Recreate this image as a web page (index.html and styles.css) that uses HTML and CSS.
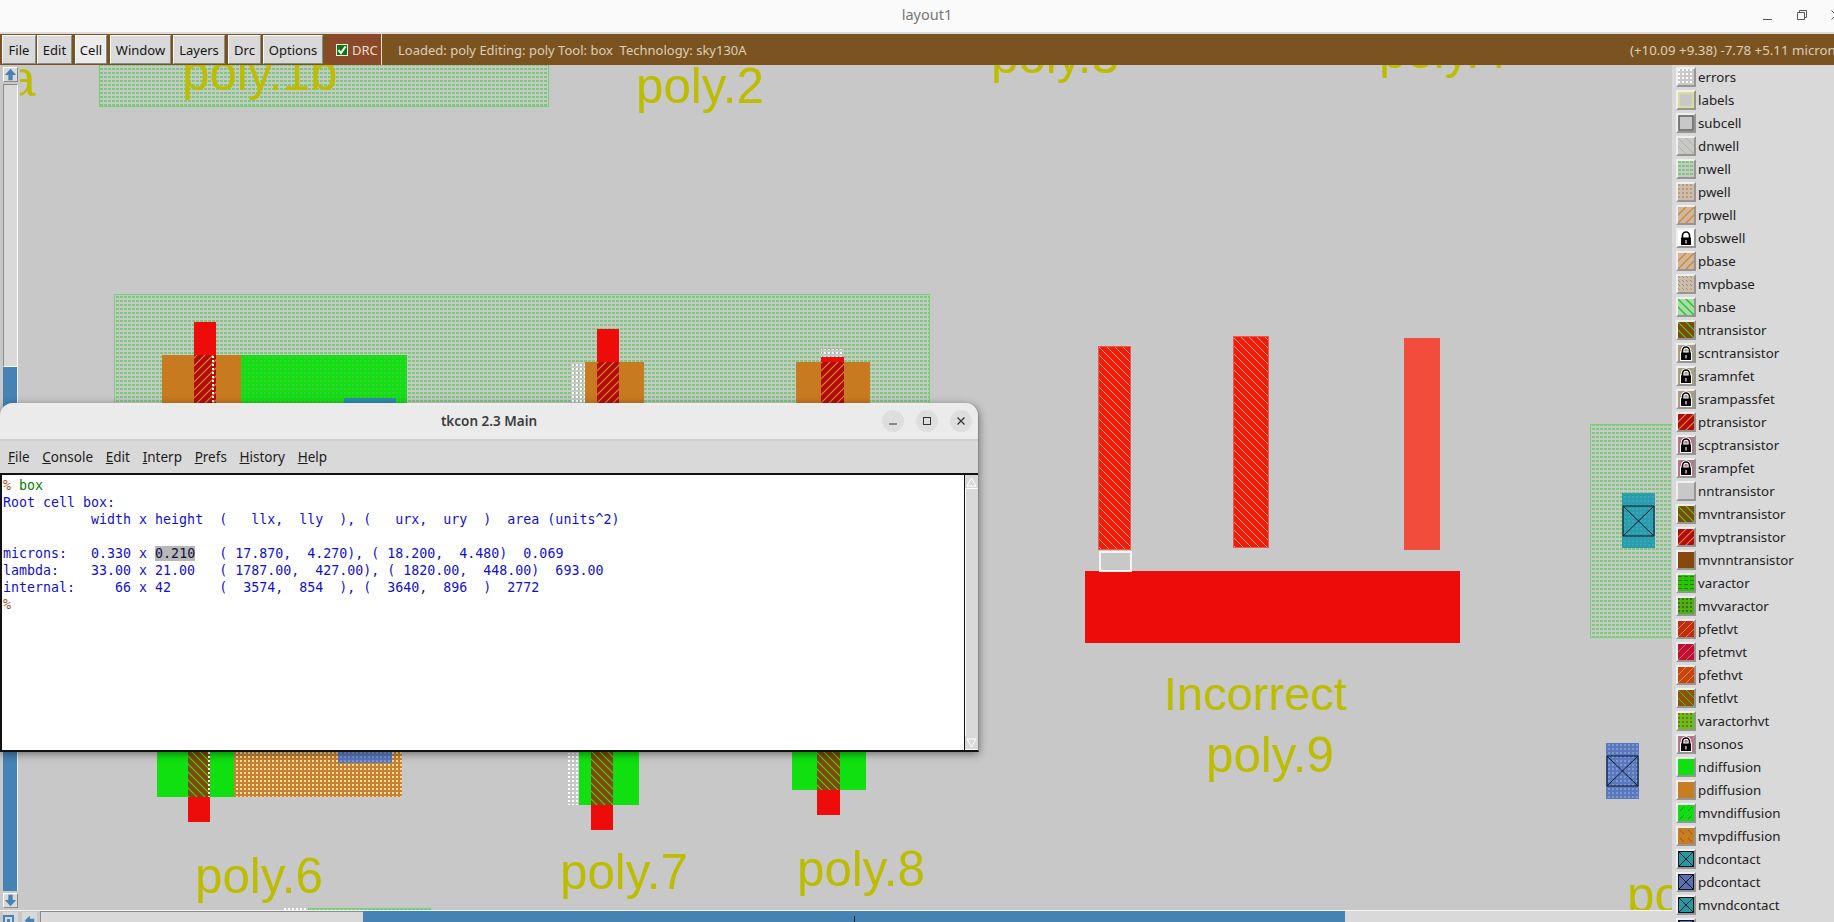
FILE: index.html
```html
<!DOCTYPE html>
<html lang="en">
<head>
  <meta charset="UTF-8">
  <meta name="viewport" content="width=device-width, initial-scale=1.0">
  <title>layout1</title>
  <link rel="stylesheet" href="styles.css">
</head>
<body>
  <header class="titlebar">
    <span class="titlebar-name">layout1</span>
    <div class="titlebar-controls">
      <svg width="12" height="12" viewBox="0 0 12 12"><path d="M1 10.5H10" stroke="#555" fill="none"/></svg>
      <svg width="12" height="12" viewBox="0 0 12 12"><path d="M1.5 3.5H8.5V10.5H1.5ZM3.5 3.5V1.5H10.5V8.5H8.5" stroke="#555" fill="none"/></svg>
      <svg width="12" height="12" viewBox="0 0 12 12"><path d="M1.5 1.5L10.5 10.5M10.5 1.5L1.5 10.5" stroke="#555" fill="none"/></svg>
    </div>
  </header>

  <div class="toolbar">
    <button class="menu-btn btn-file">File</button>
    <button class="menu-btn btn-edit">Edit</button>
    <button class="menu-btn btn-cell active">Cell</button>
    <button class="menu-btn btn-window">Window</button>
    <button class="menu-btn btn-layers">Layers</button>
    <button class="menu-btn btn-drc">Drc</button>
    <button class="menu-btn btn-options">Options</button>
    <div class="drc-toggle">
      <svg class="drc-check" width="12" height="12" viewBox="0 0 12 12"><rect x="0.5" y="0.5" width="11" height="11" fill="#0a7a10" stroke="#eee"/><path d="M2.5 6L5 9L9.5 2.5" stroke="#fff" stroke-width="2" fill="none"/></svg>
      <span>DRC</span>
    </div>
    <span class="status">Loaded: poly Editing: poly Tool: box&nbsp; Technology: sky130A</span>
    <span class="coords">(+10.09 +9.38) -7.78 +5.11 microns</span>
  </div>

  <div class="main">
    <div class="workspace">
      <div class="view-row">
        <div class="vscroll">
          <div class="scroll-btn"><svg width="13" height="13" viewBox="0 0 15 15"><path d="M7.5 1L14 8H10V14H5V8H1Z" fill="#4682b4"/></svg></div>
          <div class="vscroll-trough"></div>
          <div class="vscroll-thumb"></div>
          <div class="scroll-btn"><svg width="13" height="13" viewBox="0 0 15 15"><path d="M7.5 14L14 7H10V1H5V7H1Z" fill="#4682b4"/></svg></div>
        </div>

        <svg class="layout-view" viewBox="20 65 1652 845" width="1652" height="845">
          <defs>
            <pattern id="p-nwell" width="4" height="4" patternUnits="userSpaceOnUse"><rect width="4" height="4" fill="#c8c8c8"/><rect width="3" height="2" fill="#78cc78"/></pattern>
            <pattern id="p-pwell" width="4" height="4" patternUnits="userSpaceOnUse"><rect width="4" height="4" fill="#ccbcaa"/><rect width="2" height="2" fill="#b89c80"/></pattern>
            <pattern id="p-errors" width="4" height="4" patternUnits="userSpaceOnUse"><rect width="4" height="4" fill="#c8c8c8"/><rect width="2" height="2" fill="#fff"/></pattern>
            <pattern id="p-white" width="4" height="4" patternUnits="userSpaceOnUse"><rect width="2" height="2" fill="#fff"/></pattern>
            <pattern id="p-ndot" width="4" height="4" patternUnits="userSpaceOnUse"><rect width="4" height="4" fill="#10e010"/><rect width="2" height="2" fill="#3ccc3c"/></pattern>
            <pattern id="p-pdot" width="4" height="4" patternUnits="userSpaceOnUse"><rect width="4" height="4" fill="#c8822a"/><rect width="2" height="2" fill="#f2dcb4"/></pattern>
            <pattern id="p-bluedot" width="4" height="4" patternUnits="userSpaceOnUse"><rect width="4" height="4" fill="#5a78c0"/><rect width="2" height="2" fill="#7c98cc"/></pattern>
            <pattern id="p-tealdot" width="4" height="4" patternUnits="userSpaceOnUse"><rect width="4" height="4" fill="#2a9cb0"/><rect width="2" height="2" fill="#3aa6b4"/></pattern>
            <pattern id="p-ptrans" width="8" height="8" patternUnits="userSpaceOnUse"><rect width="8" height="8" fill="#b00c0c"/><path d="M-1 1L1 -1M0 8L8 0M7 9L9 7" stroke="#e8892c" stroke-width="1.1"/></pattern>
            <pattern id="p-ntrans" width="8" height="8" patternUnits="userSpaceOnUse"><rect width="8" height="8" fill="#7a4a10"/><path d="M-1 7L1 9M0 0L8 8M7 -1L9 1" stroke="#5cc810" stroke-width="1.2"/></pattern>
            <pattern id="p-polyhatch" width="8" height="8" patternUnits="userSpaceOnUse"><rect width="8" height="8" fill="#f01c08"/><path d="M-1 7L1 9M0 0L8 8M7 -1L9 1" stroke="#ffc8c0" stroke-width="0.8"/></pattern>
            <pattern id="p-dnwell" width="8" height="8" patternUnits="userSpaceOnUse"><rect width="8" height="8" fill="#c8c8c8"/><path d="M-1 7L1 9M0 0L8 8M7 -1L9 1" stroke="#b4b48c" stroke-width="1"/></pattern>
            <pattern id="p-rpwell" width="8" height="8" patternUnits="userSpaceOnUse"><rect width="8" height="8" fill="#d0b89c"/><path d="M-1 1L1 -1M0 8L8 0M7 9L9 7" stroke="#d08438" stroke-width="1.3"/></pattern>
            <pattern id="p-mvpbase" width="4" height="4" patternUnits="userSpaceOnUse"><rect width="4" height="4" fill="#ccbcaa"/><path d="M0 0L2 2" stroke="#a88a70" stroke-width="1"/></pattern>
            <pattern id="p-nbase" width="8" height="8" patternUnits="userSpaceOnUse"><rect width="8" height="8" fill="#aed8ae"/><path d="M-1 7L1 9M0 0L8 8M7 -1L9 1" stroke="#18cc18" stroke-width="1.4"/></pattern>
            <pattern id="p-vardash" width="6" height="4" patternUnits="userSpaceOnUse"><rect width="6" height="4" fill="#14d000"/><rect y="1" width="4" height="1" fill="#8a4a10"/></pattern>
            <pattern id="p-mvvar" width="4" height="4" patternUnits="userSpaceOnUse"><rect width="4" height="4" fill="#4cb410"/><rect width="2" height="2" fill="#4a6a10"/></pattern>
            <pattern id="p-varhvt" width="4" height="4" patternUnits="userSpaceOnUse"><rect width="4" height="4" fill="#58c818"/><rect width="2" height="2" fill="#a06010"/></pattern>
            <pattern id="p-pfetlvt" width="8" height="8" patternUnits="userSpaceOnUse"><rect width="8" height="8" fill="#c02c10"/><path d="M-1 1L1 -1M0 8L8 0M7 9L9 7" stroke="#e8892c" stroke-width="1"/></pattern>
            <pattern id="p-pfetmvt" width="8" height="8" patternUnits="userSpaceOnUse"><rect width="8" height="8" fill="#c01034"/><path d="M-1 1L1 -1M0 8L8 0M7 9L9 7" stroke="#e86070" stroke-width="1"/></pattern>
            <pattern id="p-pfethvt" width="8" height="8" patternUnits="userSpaceOnUse"><rect width="8" height="8" fill="#c84410"/><path d="M-1 1L1 -1M0 8L8 0M7 9L9 7" stroke="#f09030" stroke-width="1"/></pattern>
            <pattern id="p-nfetlvt" width="8" height="8" patternUnits="userSpaceOnUse"><rect width="8" height="8" fill="#8a5410"/><path d="M-1 7L1 9M0 0L8 8M7 -1L9 1" stroke="#5ac010" stroke-width="1"/></pattern>
            <pattern id="p-mvndiff" width="8" height="8" patternUnits="userSpaceOnUse"><rect width="8" height="8" fill="#14dc14"/><path d="M2 6L6 2" stroke="#0a8a0a" stroke-width="0.8"/></pattern>
            <pattern id="p-mvpdiff" width="8" height="8" patternUnits="userSpaceOnUse"><rect width="8" height="8" fill="#c87c24"/><path d="M2 2L6 6" stroke="#8a5414" stroke-width="0.8"/></pattern>
            <symbol id="lock" viewBox="0 0 16 16">
              <path d="M4.5 8V5.5a3.5 3.5 0 0 1 7 0V8" fill="none" stroke="#fff" stroke-width="3.4"/>
              <rect x="2" y="6.5" width="12" height="9.5" fill="#fff"/>
              <path d="M4.5 8V5.5a3.5 3.5 0 0 1 7 0V8" fill="none" stroke="#000" stroke-width="1.6"/>
              <rect x="3" y="7.5" width="10" height="7.5" fill="#000"/>
              <rect x="7" y="10" width="2" height="3.5" fill="#b08090"/>
            </symbol>
            <symbol id="cross" viewBox="0 0 16 16" preserveAspectRatio="none">
              <path class="cross-line" d="M0.5 0.5H15.5V15.5H0.5ZM0.5 0.5L15.5 15.5M15.5 0.5L0.5 15.5"/>
            </symbol>
          </defs>

          <g class="lbl">
            <text x="8" y="96">a</text>
            <text x="636" y="103">poly.2</text>
            <text x="991" y="73">poly.3</text>
            <text x="1379" y="68">poly.4</text>
          </g>

          <rect class="well" x="99.5" y="64.5" width="449" height="42" fill="url(#p-nwell)"/>
          <text class="lbl" x="182" y="90">poly.1b</text>

          <!-- poly.6 group, top half -->
          <rect class="well" x="114.5" y="294.5" width="815" height="200" fill="url(#p-nwell)"/>
          <rect x="194" y="322" width="22" height="33" fill="#ee0c0a"/>
          <rect x="162" y="355" width="79" height="60" fill="#c87a20"/>
          <rect x="194" y="355" width="22" height="60" fill="url(#p-ptrans)"/>
          <rect x="212" y="355" width="4" height="60" fill="url(#p-white)"/>
          <rect x="241" y="355" width="166" height="60" fill="url(#p-ndot)"/>
          <rect x="344" y="398" width="52" height="12" fill="#2b8fb0"/>

          <!-- poly.7 group, top half -->
          <rect x="597" y="329" width="22" height="33" fill="#ee0c0a"/>
          <rect x="571" y="363" width="14" height="50" fill="url(#p-white)"/>
          <rect x="585" y="362" width="59" height="50" fill="#c87a20"/>
          <rect x="597" y="362" width="22" height="50" fill="url(#p-ptrans)"/>

          <!-- poly.8 group, top half -->
          <rect x="821" y="349" width="23" height="8" fill="url(#p-white)"/>
          <rect x="821" y="357" width="23" height="5" fill="#ee0c0a"/>
          <rect x="796" y="362" width="74" height="50" fill="#c87a20"/>
          <rect x="821" y="362" width="23" height="50" fill="url(#p-ptrans)"/>

          <!-- lower halves below the console -->
          <rect x="157" y="740" width="77" height="57" fill="#10e010"/>
          <rect x="234" y="740" width="168" height="57" fill="url(#p-pdot)"/>
          <rect x="338" y="740" width="54" height="23" fill="url(#p-bluedot)"/>
          <rect x="188" y="740" width="22" height="57" fill="url(#p-ntrans)"/>
          <rect x="206" y="740" width="4" height="57" fill="url(#p-white)"/>
          <rect x="188" y="797" width="22" height="25" fill="#ee0c0a"/>
          <rect x="567" y="753" width="12" height="52" fill="url(#p-white)"/>
          <rect x="579" y="740" width="60" height="65" fill="#10e010"/>
          <rect x="591" y="740" width="22" height="65" fill="url(#p-ntrans)"/>
          <rect x="591" y="805" width="22" height="25" fill="#ee0c0a"/>
          <rect x="792" y="740" width="74" height="50" fill="#10e010"/>
          <rect x="817" y="740" width="23" height="50" fill="url(#p-ntrans)"/>
          <rect x="817" y="790" width="23" height="25" fill="#ee0c0a"/>

          <!-- incorrect poly.9 -->
          <rect class="poly-edge" x="1098.5" y="346.5" width="32" height="203" fill="url(#p-polyhatch)"/>
          <rect class="poly-edge" x="1233.5" y="336.5" width="35" height="211" fill="url(#p-polyhatch)"/>
          <rect x="1404" y="338" width="36" height="212" fill="#f24c3c"/>
          <rect x="1085" y="571" width="375" height="72" fill="#ec0c0a"/>
          <rect class="box-tool" x="1100" y="552" width="31" height="19"/>

          <!-- right edge wells and contacts -->
          <rect class="well" x="1590.5" y="424.5" width="90" height="213" fill="url(#p-nwell)"/>
          <rect x="1622" y="493" width="33" height="55" fill="url(#p-tealdot)"/>
          <use href="#cross" x="1622" y="505" width="33" height="32"/>
          <rect x="1606" y="743" width="33" height="56" fill="url(#p-bluedot)"/>
          <use href="#cross" x="1606" y="755" width="33" height="32"/>

          <rect class="well" x="308.5" y="908.5" width="122" height="10" fill="url(#p-nwell)"/>
          <rect x="283" y="908" width="24" height="2" fill="url(#p-white)"/>

          <g class="lbl">
            <text x="195" y="893">poly.6</text>
            <text x="560" y="889">poly.7</text>
            <text x="797" y="886">poly.8</text>
            <text class="lbl-note" x="1164" y="710">Incorrect</text>
            <text x="1206" y="772">poly.9</text>
            <text x="1627" y="912">poly</text>
          </g>
        </svg>
      </div>

      <div class="hscroll">
        <div class="scroll-corner"><svg width="11" height="11" viewBox="0 0 11 11"><path d="M1 1H10V10H1Z" fill="none" stroke="#4682b4" stroke-width="2"/><rect x="4" y="4" width="3" height="3" fill="#4682b4"/></svg></div>
        <div class="scroll-left"><svg width="15" height="11" viewBox="0 0 15 15"><path d="M1 7.5L8 1V5H14V10H8V14Z" fill="#4682b4"/></svg></div>
        <div class="hscroll-trough"></div>
        <div class="hscroll-thumb"></div>
        <div class="hscroll-rest"></div>
      </div>

      <section class="tkcon">
        <div class="tkcon-title">
          <span class="tkcon-name">tkcon 2.3 Main</span>
          <div class="tkcon-buttons">
            <span class="round-btn"><svg width="12" height="12" viewBox="0 0 12 12"><path d="M2 9H10" stroke="#333" stroke-width="1.2"/></svg></span>
            <span class="round-btn"><svg width="12" height="12" viewBox="0 0 12 12"><rect x="2.5" y="2.5" width="7" height="7" fill="none" stroke="#333" stroke-width="1"/></svg></span>
            <span class="round-btn"><svg width="12" height="12" viewBox="0 0 12 12"><path d="M2.5 2.5L9.5 9.5M9.5 2.5L2.5 9.5" stroke="#333" stroke-width="1.2"/></svg></span>
          </div>
        </div>
        <nav class="tkcon-menu">
          <span><u>F</u>ile</span>
          <span><u>C</u>onsole</span>
          <span><u>E</u>dit</span>
          <span><u>I</u>nterp</span>
          <span><u>P</u>refs</span>
          <span><u>H</u>istory</span>
          <span><u>H</u>elp</span>
        </nav>
        <div class="tkcon-body">
<pre class="console"><span class="prompt">%</span> <span class="cmd">box</span>
Root cell box:
           width x height  (   llx,  lly  ), (   urx,  ury  )  area (units^2)

microns:   0.330 x <span class="sel">0.210</span>   ( 17.870,  4.270), ( 18.200,  4.480)  0.069
lambda:    33.00 x 21.00   ( 1787.00,  427.00), ( 1820.00,  448.00)  693.00
internal:     66 x 42      (  3574,  854  ), (  3640,  896  )  2772
<span class="prompt">%</span></pre>
          <div class="tkcon-scroll">
            <div class="tkcon-up"><svg width="11" height="10" viewBox="0 0 11 10"><path d="M5.5 1L10 9H1Z" fill="#d9d9d9" stroke="#fff"/></svg></div>
            <div class="tkcon-track"></div>
            <div class="tkcon-up"><svg width="11" height="10" viewBox="0 0 11 10"><path d="M5.5 9L10 1H1Z" fill="#d9d9d9" stroke="#fff"/></svg></div>
          </div>
        </div>
      </section>
    </div>

    <aside class="layers">
      <div class="layer"><svg class="swatch" viewBox="0 0 16 16"><rect width="16" height="16" fill="url(#p-errors)"/></svg>errors</div>
      <div class="layer"><svg class="swatch" viewBox="0 0 16 16"><rect x="1" y="1" width="14" height="14" fill="#c8c8c8" stroke="#dcdc9c" stroke-width="2"/></svg>labels</div>
      <div class="layer"><svg class="swatch" viewBox="0 0 16 16"><rect x="1" y="1" width="14" height="14" fill="#c8c8c8" stroke="#666" stroke-width="1.6"/></svg>subcell</div>
      <div class="layer"><svg class="swatch" viewBox="0 0 16 16"><rect width="16" height="16" fill="url(#p-dnwell)"/></svg>dnwell</div>
      <div class="layer"><svg class="swatch" viewBox="0 0 16 16"><rect width="16" height="16" fill="url(#p-nwell)"/></svg>nwell</div>
      <div class="layer"><svg class="swatch" viewBox="0 0 16 16"><rect width="16" height="16" fill="url(#p-pwell)"/></svg>pwell</div>
      <div class="layer"><svg class="swatch" viewBox="0 0 16 16"><rect width="16" height="16" fill="url(#p-rpwell)"/></svg>rpwell</div>
      <div class="layer"><svg class="swatch" viewBox="0 0 16 16"><rect width="16" height="16" fill="#fff"/><use href="#lock" width="16" height="16"/></svg>obswell</div>
      <div class="layer"><svg class="swatch" viewBox="0 0 16 16"><rect width="16" height="16" fill="url(#p-rpwell)"/></svg>pbase</div>
      <div class="layer"><svg class="swatch" viewBox="0 0 16 16"><rect width="16" height="16" fill="url(#p-mvpbase)"/></svg>mvpbase</div>
      <div class="layer"><svg class="swatch" viewBox="0 0 16 16"><rect width="16" height="16" fill="url(#p-nbase)"/></svg>nbase</div>
      <div class="layer"><svg class="swatch" viewBox="0 0 16 16"><rect width="16" height="16" fill="url(#p-ntrans)"/></svg>ntransistor</div>
      <div class="layer"><svg class="swatch" viewBox="0 0 16 16"><rect width="16" height="16" fill="#a8a080"/><use href="#lock" width="16" height="16"/></svg>scntransistor</div>
      <div class="layer"><svg class="swatch" viewBox="0 0 16 16"><rect width="16" height="16" fill="#a8a080"/><use href="#lock" width="16" height="16"/></svg>sramnfet</div>
      <div class="layer"><svg class="swatch" viewBox="0 0 16 16"><rect width="16" height="16" fill="#a8a080"/><use href="#lock" width="16" height="16"/></svg>srampassfet</div>
      <div class="layer"><svg class="swatch" viewBox="0 0 16 16"><rect width="16" height="16" fill="url(#p-ptrans)"/></svg>ptransistor</div>
      <div class="layer"><svg class="swatch" viewBox="0 0 16 16"><rect width="16" height="16" fill="#b07888"/><use href="#lock" width="16" height="16"/></svg>scptransistor</div>
      <div class="layer"><svg class="swatch" viewBox="0 0 16 16"><rect width="16" height="16" fill="#b07888"/><use href="#lock" width="16" height="16"/></svg>srampfet</div>
      <div class="layer"><svg class="swatch" viewBox="0 0 16 16"><rect width="16" height="16" fill="#c8c8c8"/></svg>nntransistor</div>
      <div class="layer"><svg class="swatch" viewBox="0 0 16 16"><rect width="16" height="16" fill="url(#p-ntrans)"/></svg>mvntransistor</div>
      <div class="layer"><svg class="swatch" viewBox="0 0 16 16"><rect width="16" height="16" fill="url(#p-ptrans)"/></svg>mvptransistor</div>
      <div class="layer"><svg class="swatch" viewBox="0 0 16 16"><rect width="16" height="16" fill="#86480c"/></svg>mvnntransistor</div>
      <div class="layer"><svg class="swatch" viewBox="0 0 16 16"><rect width="16" height="16" fill="url(#p-vardash)"/></svg>varactor</div>
      <div class="layer"><svg class="swatch" viewBox="0 0 16 16"><rect width="16" height="16" fill="url(#p-mvvar)"/></svg>mvvaractor</div>
      <div class="layer"><svg class="swatch" viewBox="0 0 16 16"><rect width="16" height="16" fill="url(#p-pfetlvt)"/></svg>pfetlvt</div>
      <div class="layer"><svg class="swatch" viewBox="0 0 16 16"><rect width="16" height="16" fill="url(#p-pfetmvt)"/></svg>pfetmvt</div>
      <div class="layer"><svg class="swatch" viewBox="0 0 16 16"><rect width="16" height="16" fill="url(#p-pfethvt)"/></svg>pfethvt</div>
      <div class="layer"><svg class="swatch" viewBox="0 0 16 16"><rect width="16" height="16" fill="url(#p-nfetlvt)"/></svg>nfetlvt</div>
      <div class="layer"><svg class="swatch" viewBox="0 0 16 16"><rect width="16" height="16" fill="url(#p-varhvt)"/></svg>varactorhvt</div>
      <div class="layer"><svg class="swatch" viewBox="0 0 16 16"><rect width="16" height="16" fill="#b07888"/><use href="#lock" width="16" height="16"/></svg>nsonos</div>
      <div class="layer"><svg class="swatch" viewBox="0 0 16 16"><rect width="16" height="16" fill="#10e010"/></svg>ndiffusion</div>
      <div class="layer"><svg class="swatch" viewBox="0 0 16 16"><rect width="16" height="16" fill="#c87c24"/></svg>pdiffusion</div>
      <div class="layer"><svg class="swatch" viewBox="0 0 16 16"><rect width="16" height="16" fill="url(#p-mvndiff)"/></svg>mvndiffusion</div>
      <div class="layer"><svg class="swatch" viewBox="0 0 16 16"><rect width="16" height="16" fill="url(#p-mvpdiff)"/></svg>mvpdiffusion</div>
      <div class="layer"><svg class="swatch" viewBox="0 0 16 16"><rect width="16" height="16" fill="#249aa0"/><use href="#cross" width="16" height="16"/></svg>ndcontact</div>
      <div class="layer"><svg class="swatch" viewBox="0 0 16 16"><rect width="16" height="16" fill="#5a70b0"/><use href="#cross" width="16" height="16"/></svg>pdcontact</div>
      <div class="layer"><svg class="swatch" viewBox="0 0 16 16"><rect width="16" height="16" fill="#249aa0"/><use href="#cross" width="16" height="16"/></svg>mvndcontact</div>
      <div class="layer"><svg class="swatch" viewBox="0 0 16 16"><rect width="16" height="16" fill="#5a70b0"/><use href="#cross" width="16" height="16"/></svg>mvpdcontact</div>
    </aside>
  </div>
</body>
</html>
```

FILE: styles.css
```css
html, body {
  margin: 0;
  padding: 0;
  height: 100%;
  overflow: hidden;
}
body {
  font-family: 'Noto Sans', 'Open Sans', sans-serif;
  font-size: 13px;
  color: #1a1a1a;
  background: #d9d9d9;
  display: flex;
  flex-direction: column;
}

/* window title */
.titlebar {
  height: 32px;
  flex: none;
  background: #fafafa;
  border-bottom: 2px solid #dcdcdc;
  display: flex;
  justify-content: center;
  align-items: center;
  position: relative;
}
.titlebar-name {
  font-size: 14.5px;
  color: #777;
  margin-top: -5px;
  margin-left: 20px;
}
.titlebar-controls {
  position: absolute;
  left: 1762px;
  top: 9px;
  display: flex;
  gap: 22px;
}

/* toolbar */
.toolbar {
  height: 31px;
  flex: none;
  background: #7a5320;
  display: flex;
  align-items: stretch;
  white-space: nowrap;
  padding-left: 2px;
  overflow: hidden;
}
.menu-btn {
  font: inherit;
  font-size: 13px;
  color: #151515;
  background: #d9d9d9;
  padding: 0;
  box-sizing: border-box;
  border: 1px solid;
  border-color: #fff #8a8a8a #8a8a8a #fff;
  margin: 1px 2px 1px 0;
}
.menu-btn.active {
  background: #ececec;
}
.btn-file { width: 34px; margin-right: 1px; }
.btn-edit { width: 35px; margin-right: 3px; }
.btn-cell { width: 32px; margin-right: 3px; }
.btn-window { width: 61px; margin-right: 2px; }
.btn-layers { width: 52px; margin-right: 3px; }
.btn-drc { width: 33px; margin-right: 2px; }
.btn-options { width: 60px; margin-right: 4px; }
.drc-toggle {
  width: 55px;
  box-sizing: border-box;
  background: #8a4a2a;
  border-right: 1px solid #e8e0d0;
  color: #eadfce;
  display: flex;
  align-items: center;
  gap: 4px;
  padding-left: 9px;
}
.status {
  color: #dccfb8;
  margin-left: 16px;
  align-self: center;
}
.coords {
  color: #dccfb8;
  font-size: 13.3px;
  margin-left: auto;
  width: 204px;
  flex: none;
  overflow: hidden;
  align-self: center;
}

/* main area */
.main {
  flex: 1;
  display: flex;
  min-height: 0;
}
.workspace {
  width: 1672px;
  flex: none;
  display: flex;
  flex-direction: column;
  position: relative;
  background: #c8c8c8;
}
.view-row {
  display: flex;
  height: 845px;
  flex: none;
}

/* scrollbars */
.vscroll {
  width: 20px;
  flex: none;
  box-sizing: border-box;
  padding: 2px 2px 2px 3px;
  display: flex;
  flex-direction: column;
  gap: 2px;
}
.scroll-btn {
  height: 15px;
  flex: none;
  box-sizing: border-box;
  background: #d9d9d9;
  border: 1px solid;
  border-color: #fff #8a8a8a #8a8a8a #fff;
  display: flex;
  align-items: center;
  justify-content: center;
}
.vscroll-trough {
  height: 283px;
  flex: none;
  box-sizing: border-box;
  background: #d9d9d9;
  border: 1px solid;
  border-color: #8a8a8a #fff #fff #8a8a8a;
  margin-bottom: -2px;
}
.vscroll-thumb {
  flex: 1;
  background: #4682b4;
  border-right: 1px solid #eee;
}
.hscroll {
  height: 12px;
  flex: none;
  box-sizing: border-box;
  border-top: 1px solid #f4f4f4;
  display: flex;
  overflow: hidden;
}
.scroll-corner {
  width: 15px;
  margin: 1px 4px 0 3px;
  background: #d9d9d9;
}
.scroll-left {
  width: 15px;
  margin: 1px 3px 0 0;
  background: #d9d9d9;
}
.hscroll-trough {
  width: 323px;
  flex: none;
  box-sizing: border-box;
  background: #d9d9d9;
  border-top: 1px solid #8a8a8a;
  border-left: 1px solid #8a8a8a;
}
.hscroll-thumb {
  width: 982px;
  flex: none;
  background: linear-gradient(#222, #222) 491px 5px / 1px 100% no-repeat, #4682b4;
}
.hscroll-rest {
  flex: 1;
  background: #d9d9d9;
}

/* layout canvas */
.layout-view {
  flex: none;
  display: block;
  background: #c8c8c8;
}
.lbl {
  font-family: 'Liberation Sans', Arial, sans-serif;
  font-size: 49.3px;
  fill: #bcbc00;
}
.lbl-note {
  font-size: 47px;
}
.well {
  stroke: #74d274;
  stroke-width: 1;
}
.poly-edge {
  stroke: #f05a4a;
  stroke-width: 1;
}
.box-tool {
  fill: none;
  stroke: #f4f4f4;
  stroke-width: 2;
}
.cross-line {
  fill: none;
  stroke: #0c1420;
  stroke-width: 1;
  vector-effect: non-scaling-stroke;
}

/* tkcon console window */
.tkcon {
  position: absolute;
  left: 0;
  top: 338px;
  width: 979px;
  height: 349px;
  box-sizing: border-box;
  border-radius: 13px 13px 0 0;
  border-right: 1px solid #8a8a8a;
  border-bottom: 2px solid #111;
  box-shadow: 0 2px 8px rgba(0, 0, 0, 0.45);
  display: flex;
  flex-direction: column;
  overflow: hidden;
  background: #d9d9d9;
}
.tkcon-title {
  height: 36px;
  flex: none;
  background: #ebebeb;
  border-bottom: 2px solid #cfcfcf;
  display: flex;
  justify-content: center;
  align-items: center;
  position: relative;
}
.tkcon-name {
  font-size: 13.5px;
  font-weight: 600;
  color: #3c3c3c;
}
.tkcon-buttons {
  position: absolute;
  left: 882px;
  top: 7px;
  display: flex;
  gap: 12px;
}
.round-btn {
  width: 22px;
  height: 22px;
  border-radius: 50%;
  background: #dedede;
  display: flex;
  align-items: center;
  justify-content: center;
}
.tkcon-menu {
  height: 32px;
  flex: none;
  box-sizing: border-box;
  padding-left: 8px;
  display: flex;
  align-items: center;
  gap: 12.7px;
  font-size: 13.5px;
  color: #1c1c1c;
}
.tkcon-body {
  flex: 1;
  min-height: 0;
  display: flex;
  border-top: 2px solid #111;
  border-left: 2px solid #111;
}
.console {
  flex: 1;
  margin: 0;
  padding: 2px 0 0 1px;
  background: #fff;
  color: #1010d0;
  font-family: 'DejaVu Sans Mono', 'Liberation Mono', monospace;
  font-size: 13.3px;
  line-height: 17px;
  border-right: 1px solid #111;
}
.prompt {
  color: #a0522d;
}
.cmd {
  color: #008000;
}
.sel {
  background: #b8b8b8;
  color: #101040;
}
.tkcon-scroll {
  width: 13px;
  flex: none;
  display: flex;
  flex-direction: column;
  background: #d9d9d9;
}
.tkcon-up {
  height: 13px;
  flex: none;
  display: flex;
  align-items: center;
  justify-content: center;
  border-bottom: 1px solid #fff;
}
.tkcon-track {
  flex: 1;
  border-left: 1px solid #fff;
}

/* layer list */
.layers {
  flex: 1;
  box-sizing: border-box;
  padding: 0 0 0 4px;
  overflow: hidden;
  background: #d9d9d9;
}
.layer {
  height: 23px;
  display: flex;
  align-items: center;
  gap: 2px;
  font-size: 13.3px;
  color: #222;
  white-space: nowrap;
}
.swatch {
  width: 20px;
  height: 20px;
  flex: none;
  box-sizing: border-box;
  border: 2px solid;
  border-color: #efefef #959595 #959595 #efefef;
}
```
